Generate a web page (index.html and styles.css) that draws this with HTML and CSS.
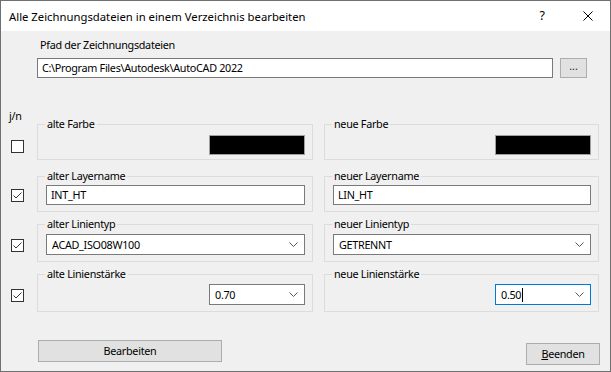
FILE: index.html
```html
<!DOCTYPE html>
<html lang="de">
<head>
<meta charset="utf-8">
<title>Alle Zeichnungsdateien in einem Verzeichnis bearbeiten</title>
<link rel="stylesheet" href="styles.css">
</head>
<body>
<div class="window">
  <div class="titlebar">
    <span class="title">Alle Zeichnungsdateien in einem Verzeichnis bearbeiten</span>
    <span class="help">?</span>
    <svg class="close" width="10" height="10" viewBox="0 0 10 10"><path d="M0.5 0.5 L9.5 9.5 M9.5 0.5 L0.5 9.5" stroke="#000" stroke-width="1" fill="none"/></svg>
  </div>
  <div class="content">
    <div class="path">
      <div class="path-label">Pfad der Zeichnungsdateien</div>
      <div class="path-row">
        <div class="textbox path-box">C:\Program Files\Autodesk\AutoCAD 2022</div>
        <div class="btn browse">...</div>
      </div>
    </div>

    <div class="rows">
      <div class="check-cell first">
        <span class="jn">j/n</span>
        <span class="checkbox"></span>
      </div>
      <fieldset class="group first">
        <legend>alte Farbe</legend>
        <div class="swatch"></div>
      </fieldset>
      <fieldset class="group first">
        <legend>neue Farbe</legend>
        <div class="swatch"></div>
      </fieldset>

      <div class="check-cell second">
        <span class="checkbox checked"><svg width="11" height="11" viewBox="0 0 11 11"><polyline points="1.5,5.5 4,8 9.5,2.5" fill="none" stroke="#333" stroke-width="1"/></svg></span>
      </div>
      <fieldset class="group second">
        <legend>alter Layername</legend>
        <div class="textbox wide">INT_HT</div>
      </fieldset>
      <fieldset class="group second">
        <legend>neuer Layername</legend>
        <div class="textbox wide">LIN_HT</div>
      </fieldset>

      <div class="check-cell">
        <span class="checkbox checked"><svg width="11" height="11" viewBox="0 0 11 11"><polyline points="1.5,5.5 4,8 9.5,2.5" fill="none" stroke="#333" stroke-width="1"/></svg></span>
      </div>
      <fieldset class="group">
        <legend>alter Linientyp</legend>
        <div class="combo wide"><span>ACAD_ISO08W100</span><svg class="arrow" width="9" height="5" viewBox="0 0 9 5"><polyline points="0.5,0.5 4.5,4.5 8.5,0.5" fill="none" stroke="#555" stroke-width="1"/></svg></div>
      </fieldset>
      <fieldset class="group">
        <legend>neuer Linientyp</legend>
        <div class="combo wide"><span>GETRENNT</span><svg class="arrow" width="9" height="5" viewBox="0 0 9 5"><polyline points="0.5,0.5 4.5,4.5 8.5,0.5" fill="none" stroke="#555" stroke-width="1"/></svg></div>
      </fieldset>

      <div class="check-cell">
        <span class="checkbox checked"><svg width="11" height="11" viewBox="0 0 11 11"><polyline points="1.5,5.5 4,8 9.5,2.5" fill="none" stroke="#333" stroke-width="1"/></svg></span>
      </div>
      <fieldset class="group">
        <legend>alte Linienstärke</legend>
        <div class="combo narrow"><span>0.70</span><svg class="arrow" width="9" height="5" viewBox="0 0 9 5"><polyline points="0.5,0.5 4.5,4.5 8.5,0.5" fill="none" stroke="#555" stroke-width="1"/></svg></div>
      </fieldset>
      <fieldset class="group">
        <legend>neue Linienstärke</legend>
        <div class="combo narrow focused"><span>0.50<i class="caret"></i></span><svg class="arrow" width="9" height="5" viewBox="0 0 9 5"><polyline points="0.5,0.5 4.5,4.5 8.5,0.5" fill="none" stroke="#555" stroke-width="1"/></svg></div>
      </fieldset>
    </div>

    <div class="footer">
      <div class="btn run">Bearbeiten</div>
      <div class="btn quit"><u>B</u>eenden</div>
    </div>
  </div>
</div>
</body>
</html>
```

FILE: styles.css
```css
* { box-sizing: border-box; }

html, body {
  margin: 0;
  padding: 0;
  background: #f0f0f0;
}

body {
  font-family: "Noto Sans", "Open Sans", sans-serif;
  font-size: 10.8px;
  letter-spacing: -0.3px;
  color: #000;
}

.window {
  width: 611px;
  height: 372px;
  border: 1px solid #707070;
  display: flex;
  flex-direction: column;
  background: #f0f0f0;
}

.titlebar {
  height: 30px;
  background: #fff;
  display: flex;
  align-items: center;
  padding-left: 8px;
  flex: none;
}

.title {
  flex: 1;
  font-size: 11.3px;
  letter-spacing: 0;
  line-height: 16px;
  margin-top: 1px;
}

.help {
  font-size: 12.5px;
  letter-spacing: 0;
  line-height: 16px;
  margin-right: 38px;
}

.close {
  margin-right: 17px;
  display: block;
}

.content {
  flex: 1;
  padding: 6px 11px 0 9px;
  display: flex;
  flex-direction: column;
}

.path {
  margin-left: 27px;
  margin-right: 12px;
}

.path-label {
  line-height: 16px;
  margin-left: 3px;
  margin-bottom: 5px;
}

.path-row {
  display: flex;
  gap: 7px;
}

.textbox {
  height: 20px;
  background: #fff;
  border: 1px solid #7a7a7a;
  line-height: 18px;
  padding-left: 4px;
  white-space: nowrap;
}

.path-box {
  width: 516px;
}

.btn {
  background: #e1e1e1;
  border: 1px solid #adadad;
  text-align: center;
  line-height: 20px;
  height: 22px;
}

.browse {
  width: 27px;
  height: 20px;
  line-height: 14px;
  font-size: 10.5px;
  letter-spacing: 0;
  color: #1a1a5a;
}

.rows {
  margin-top: 30px;
  display: grid;
  grid-template-columns: 16px 276px 275px;
  column-gap: 11px;
  row-gap: 5px;
}

.check-cell {
  display: flex;
  flex-direction: column;
  justify-content: flex-end;
  align-items: flex-start;
  padding-bottom: 10px;
}

.check-cell.first {
  justify-content: space-between;
  padding-bottom: 7px;
}

.jn {
  line-height: 16px;
  margin-left: -1px;
}

.checkbox {
  width: 13px;
  height: 13px;
  border: 1px solid #333;
  background: #fff;
  display: block;
  margin-left: 1px;
}

.checkbox svg {
  display: block;
}

.group {
  margin: 0;
  border: 1px solid #dcdcdc;
  padding: 3px 7px 6px 8px;
  min-width: 0;
  display: flex;
  justify-content: flex-end;
}

.group.first {
  margin-top: 9px;
  padding-top: 4px;
  padding-bottom: 4px;
}

.group.second {
  margin-top: 4px;
  padding-top: 2px;
}

.group legend {
  padding: 0 2px;
  margin-left: -1px;
  line-height: 14px;
}

.swatch {
  width: 96px;
  height: 20px;
  background: #000;
  border: 1px solid #a0a0a0;
}

.wide {
  width: 100%;
}

.combo {
  height: 21px;
  background: #fff;
  border: 1px solid #7a7a7a;
  display: flex;
  align-items: center;
  justify-content: space-between;
  padding-left: 5px;
  padding-right: 6px;
  white-space: nowrap;
}

.combo.narrow {
  width: 96px;
}

.combo.focused {
  border-color: #0078d7;
}

.caret {
  display: inline-block;
  width: 1px;
  height: 14px;
  background: #000;
  vertical-align: -3px;
  margin-left: 1px;
}

.arrow {
  display: block;
}

.footer {
  margin-top: 28px;
  display: flex;
  justify-content: space-between;
  align-items: flex-start;
}

.run {
  width: 184px;
  margin-left: 28px;
}

.quit {
  width: 74px;
  margin-top: 3px;
  margin-right: -1px;
}

.quit u {
  text-decoration: underline;
  text-underline-offset: 1px;
}
```
